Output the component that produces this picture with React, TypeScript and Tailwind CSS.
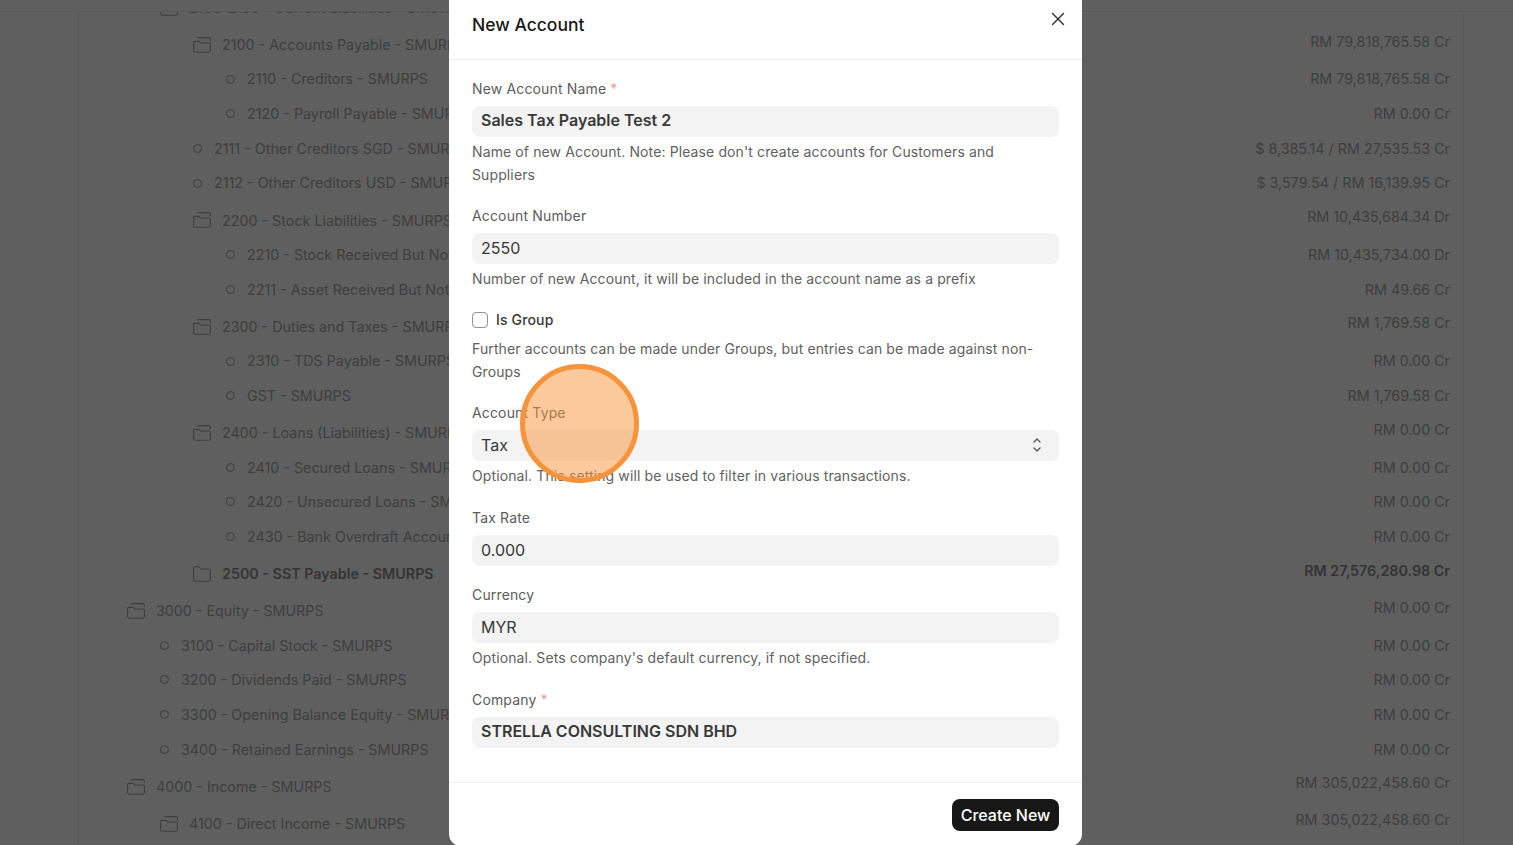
import React from 'react';
import { X } from 'lucide-react';

type Account = {
  label: string;
  amount: string;
  depth: number;
  kind: 'open' | 'closed' | 'leaf';
  bold?: boolean;
};

const accounts: Account[] = [
  { label: '2100-2199 - Current Liabilities - SMURPS', amount: '', depth: 1, kind: 'open' },
  { label: '2100 - Accounts Payable - SMURPS', amount: 'RM 79,818,765.58 Cr', depth: 2, kind: 'open' },
  { label: '2110 - Creditors - SMURPS', amount: 'RM 79,818,765.58 Cr', depth: 3, kind: 'leaf' },
  { label: '2120 - Payroll Payable - SMURPS', amount: 'RM 0.00 Cr', depth: 3, kind: 'leaf' },
  { label: '2111 - Other Creditors SGD - SMURPS', amount: '$ 8,385.14 / RM 27,535.53 Cr', depth: 2, kind: 'leaf' },
  { label: '2112 - Other Creditors USD - SMURPS', amount: '$ 3,579.54 / RM 16,139.95 Cr', depth: 2, kind: 'leaf' },
  { label: '2200 - Stock Liabilities - SMURPS', amount: 'RM 10,435,684.34 Dr', depth: 2, kind: 'open' },
  { label: '2210 - Stock Received But Not Billed - SMURPS', amount: 'RM 10,435,734.00 Dr', depth: 3, kind: 'leaf' },
  { label: '2211 - Asset Received But Not Billed - SMURPS', amount: 'RM 49.66 Cr', depth: 3, kind: 'leaf' },
  { label: '2300 - Duties and Taxes - SMURPS', amount: 'RM 1,769.58 Cr', depth: 2, kind: 'open' },
  { label: '2310 - TDS Payable - SMURPS', amount: 'RM 0.00 Cr', depth: 3, kind: 'leaf' },
  { label: 'GST - SMURPS', amount: 'RM 1,769.58 Cr', depth: 3, kind: 'leaf' },
  { label: '2400 - Loans (Liabilities) - SMURPS', amount: 'RM 0.00 Cr', depth: 2, kind: 'open' },
  { label: '2410 - Secured Loans - SMURPS', amount: 'RM 0.00 Cr', depth: 3, kind: 'leaf' },
  { label: '2420 - Unsecured Loans - SMURPS', amount: 'RM 0.00 Cr', depth: 3, kind: 'leaf' },
  { label: '2430 - Bank Overdraft Account - SMURPS', amount: 'RM 0.00 Cr', depth: 3, kind: 'leaf' },
  { label: '2500 - SST Payable - SMURPS', amount: 'RM 27,576,280.98 Cr', depth: 2, kind: 'closed', bold: true },
  { label: '3000 - Equity - SMURPS', amount: 'RM 0.00 Cr', depth: 0, kind: 'open' },
  { label: '3100 - Capital Stock - SMURPS', amount: 'RM 0.00 Cr', depth: 1, kind: 'leaf' },
  { label: '3200 - Dividends Paid - SMURPS', amount: 'RM 0.00 Cr', depth: 1, kind: 'leaf' },
  { label: '3300 - Opening Balance Equity - SMURPS', amount: 'RM 0.00 Cr', depth: 1, kind: 'leaf' },
  { label: '3400 - Retained Earnings - SMURPS', amount: 'RM 0.00 Cr', depth: 1, kind: 'leaf' },
  { label: '4000 - Income - SMURPS', amount: 'RM 305,022,458.60 Cr', depth: 0, kind: 'open' },
  { label: '4100 - Direct Income - SMURPS', amount: 'RM 305,022,458.60 Cr', depth: 1, kind: 'open' },
];

const indents = ['pl-[49px]', 'pl-[82px]', 'pl-[115px]', 'pl-[148px]'];

function FolderIcon({ open }: { open: boolean }) {
  return (
    <svg width="18" height="16" viewBox="0 0 18 16" fill="none" stroke="#a3a3a3" strokeWidth="1.1" className="shrink-0">
      {open ? (
        <>
          <path d="M.6 5.400V13.600A1.600 1.600 0 0 0 2.200 15.200H15.800A1.600 1.600 0 0 0 17.400 13.600V7.600A1.600 1.600 0 0 0 15.800 6H7.500L6 4.400H1.600A1 1 0 0 0 .6 5.400Z" />
          <path d="M4.500 .6H15.800A1.600 1.600 0 0 1 17.400 2.200V4" />
        </>
      ) : (
        <path d="M.6 2.400A1.600 1.600 0 0 1 2.200 .8H6L8 3H15.800A1.600 1.600 0 0 1 17.400 4.600V13.600A1.600 1.600 0 0 1 15.800 15.200H2.200A1.600 1.600 0 0 1 .6 13.600Z" />
      )}
    </svg>
  );
}

function AccountRow({ account }: { account: Account }) {
  const isLeaf = account.kind === 'leaf';
  return (
    <div
      className={`flex items-center justify-between pr-[13px] whitespace-nowrap text-[14.300px] ${indents[account.depth]} ${
        isLeaf ? 'h-[34.670px] pb-[1.500px]' : 'h-[37px] pt-[1.500px]'
      } ${account.bold ? 'font-semibold text-[#8c8c8c]' : 'text-[#a8a8a8]'}`}
    >
      <div className="flex items-center">
        {isLeaf ? (
          <span className="ml-[-1px] mr-[12px] h-[9px] w-[9px] rounded-full border-[1.500px] border-[#a0a0a0]" />
        ) : (
          <span className="-ml-px mr-[11px] flex">
            <FolderIcon open={account.kind === 'open'} />
          </span>
        )}
        <span>{account.label}</span>
      </div>
      <span className={isLeaf ? '' : 'mb-[7px]'}>{account.amount}</span>
    </div>
  );
}

function SelectArrows() {
  return (
    <svg width="8" height="14" viewBox="0 0 8 14" fill="none" stroke="#525252" strokeWidth="1.300" strokeLinecap="round" strokeLinejoin="round">
      <path d="M1 4 4 1 7 4" />
      <path d="M1 10 4 13 7 10" />
    </svg>
  );
}

function Field({
  label,
  value,
  required,
  bold,
  help,
  select,
  className = '',
}: {
  label: string;
  value: string;
  required?: boolean;
  bold?: boolean;
  help?: string;
  select?: boolean;
  className?: string;
}) {
  return (
    <div className={className}>
      <div className="h-5 text-sm leading-5 tracking-[0.15px] text-[#5c5c5c]">
        {label}
        {required && <span className="ml-1 text-[#e8a0a0]">*</span>}
      </div>
      <div
        className={`mt-[7px] flex h-[31px] items-center justify-between rounded-lg bg-[#f3f3f3] pl-[9px] pr-[18px] text-base text-[#383838] ${
          bold ? 'pb-[3px] font-semibold' : 'pb-px'
        }`}
      >
        <span>{value}</span>
        {select && <SelectArrows />}
      </div>
      {help && <p className="mt-[3px] text-sm leading-[23px] tracking-[0.115px] text-[#616161]">{help}</p>}
    </div>
  );
}

export default function App() {
  return (
    <div className="relative h-[845px] overflow-hidden bg-white font-['Inter',sans-serif]">
      {/* page behind the dialog */}
      <div className="h-3 border-b border-[#efefef]" />
      <div className="ml-[78px] h-[833px] w-[1386px] overflow-hidden border-x border-[#efefef]">
        <div className="-mt-[23.500px]">
          {accounts.map((account) => (
            <AccountRow key={account.label} account={account} />
          ))}
        </div>
      </div>

      <div className="absolute inset-0 bg-black/[0.627]" />

      {/* dialog */}
      <div className="absolute inset-0 flex">
        <div className="ml-[449px] flex h-[846px] w-[633px] flex-col rounded-b-xl bg-white">
          <div className="flex h-[60px] shrink-0 items-start justify-between border-b border-[#ededed] pl-[23px] pr-[13px] pt-[14px]">
            <h2 className="text-[17.500px] leading-[22px] font-medium text-[#171717]">New Account</h2>
            <X size={22} strokeWidth={1.500} className="-mt-[6px] text-[#2b2b2b]" />
          </div>

          <div className="flex flex-1 flex-col gap-5 px-[23px] pt-[19px]">
            <Field
              label="New Account Name"
              required
              bold
              value="Sales Tax Payable Test 2"
              help="Name of new Account. Note: Please don't create accounts for Customers and Suppliers"
            />
            <Field
              label="Account Number"
              value="2550"
              help="Number of new Account, it will be included in the account name as a prefix"
            />
            <div>
              <label className="flex h-5 items-center gap-2 text-sm font-medium tracking-[0.15px] text-[#383838]">
                <span className="h-4 w-4 rounded border border-[#8f8f8f] bg-white" />
                Is Group
              </label>
              <p className="mt-[7px] text-sm leading-[23px] tracking-[0.115px] text-[#616161]">
                Further accounts can be made under Groups, but entries can be made against non-Groups
              </p>
            </div>
            <Field
              label="Account Type"
              value="Tax"
              select
              help="Optional. This setting will be used to filter in various transactions."
            />
            <Field label="Tax Rate" value="0.000" className="mt-px" />
            <Field
              label="Currency"
              value="MYR"
              className="-mt-px"
              help="Optional. Sets company's default currency, if not specified."
            />
            <Field label="Company" required bold value="STRELLA CONSULTING SDN BHD" className="mt-px" />
          </div>

          <div className="flex h-[64px] shrink-0 items-start justify-end border-t border-[#ededed] pr-[23px] pt-4">
            <button className="h-8 w-[107px] rounded-lg bg-[#171717] text-base font-medium text-white">
              Create New
            </button>
          </div>
        </div>
      </div>

      {/* click highlight */}
      <div className="absolute left-[520px] top-[364px] h-[119px] w-[119px] rounded-full border-[5.500px] border-[#f7933a] bg-[#f7933a]/50" />
    </div>
  );
}
